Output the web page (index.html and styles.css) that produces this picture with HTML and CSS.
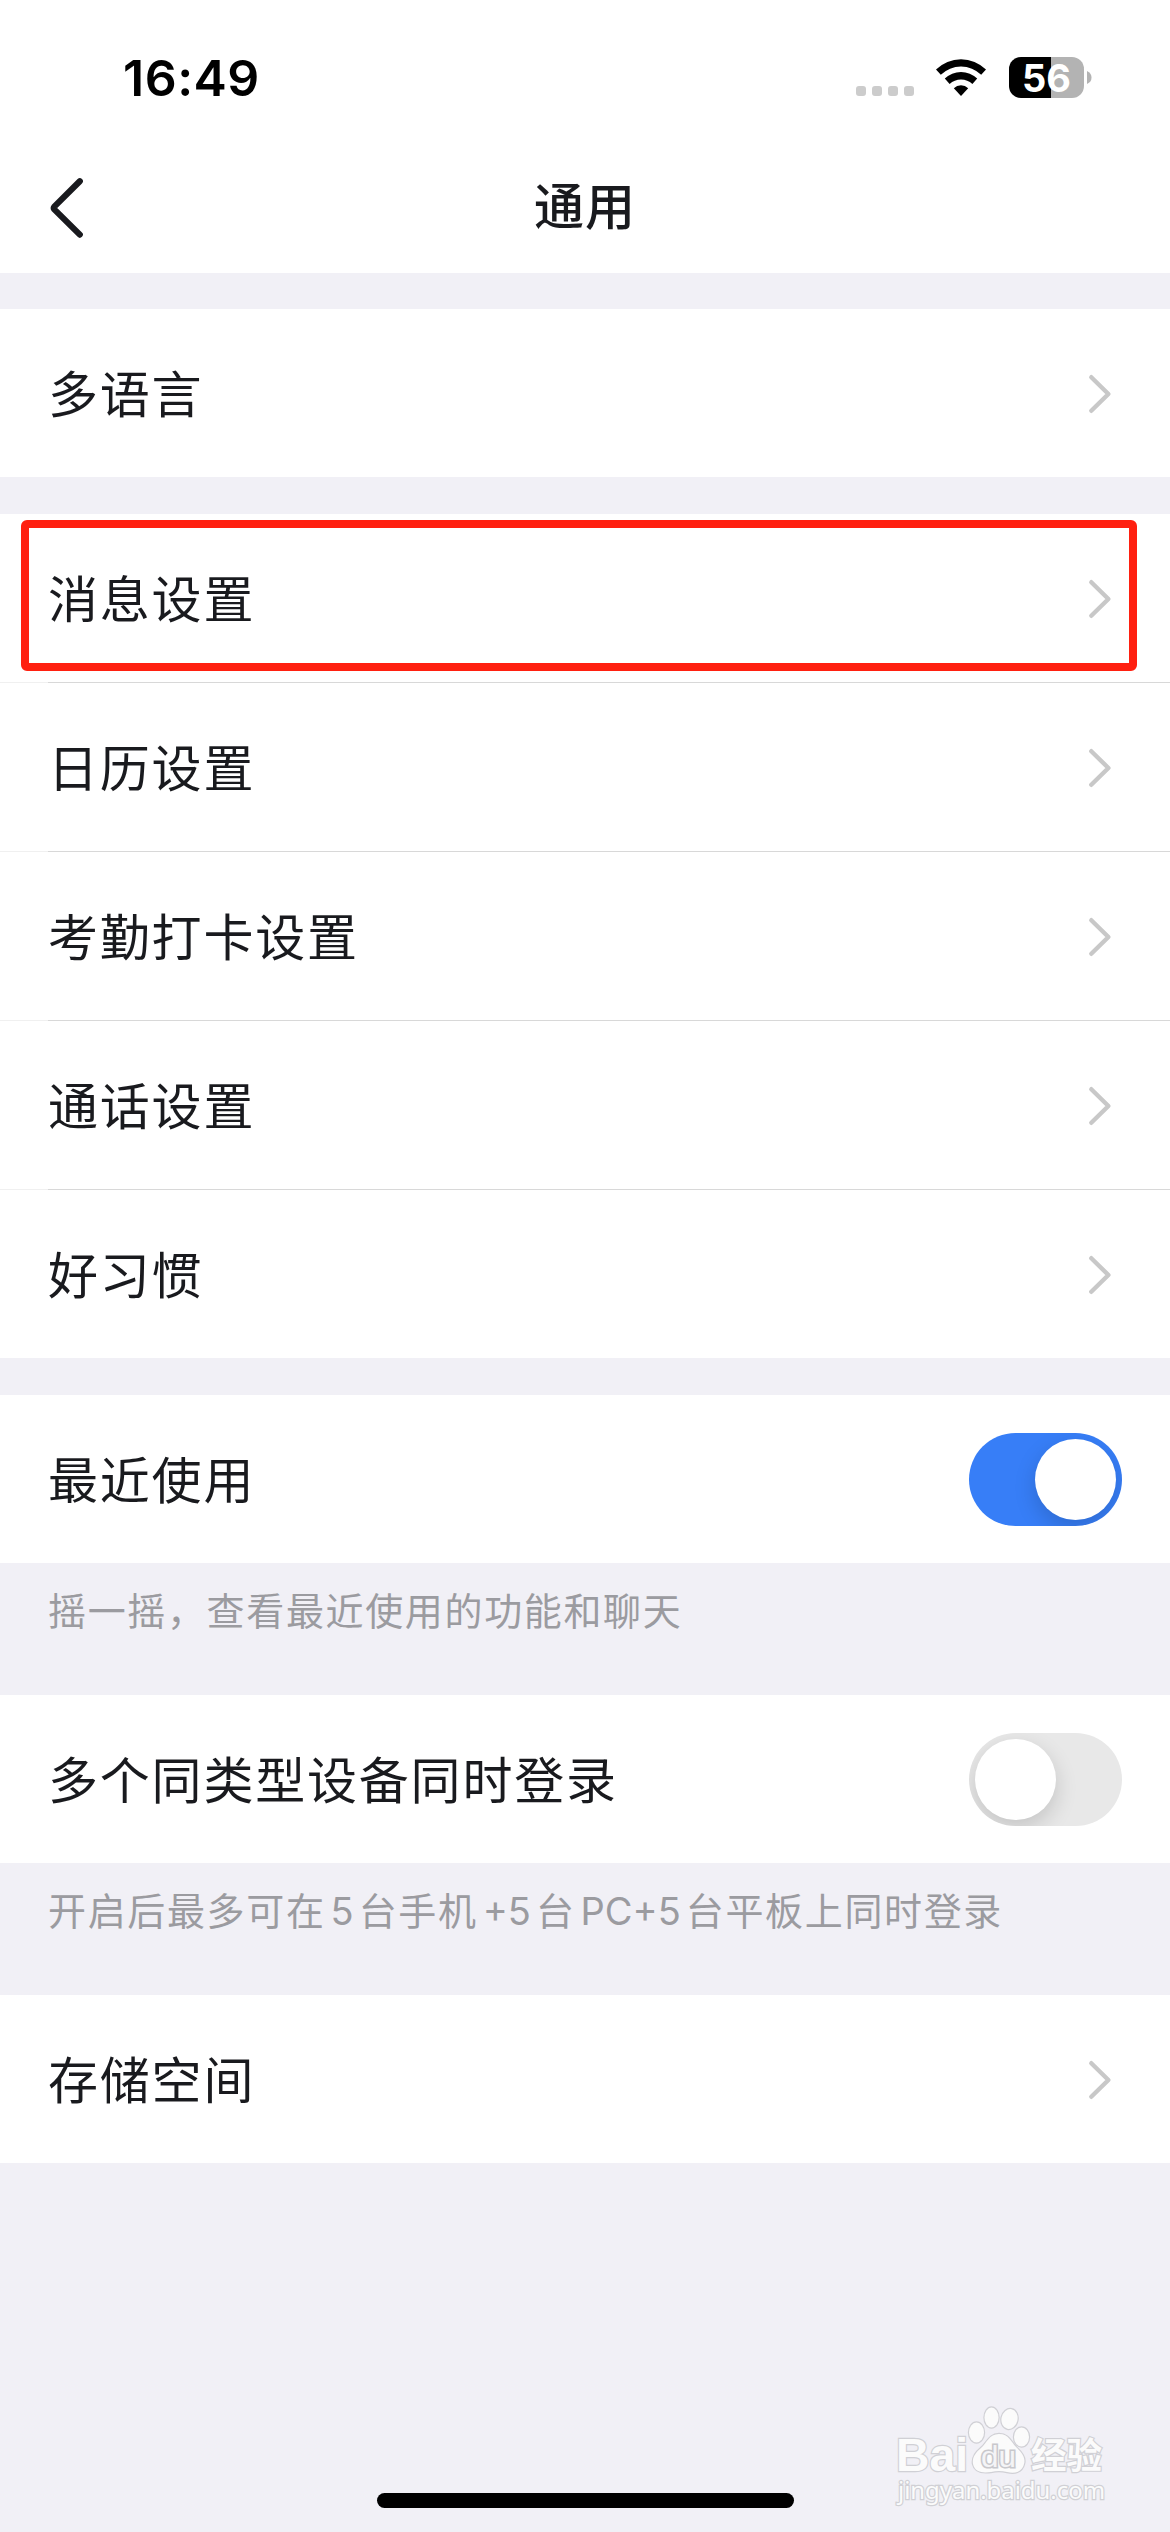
FILE: index.html
```html
<!DOCTYPE html>
<html lang="zh-CN">
<head>
<meta charset="utf-8">
<title>通用</title>
<link rel="stylesheet" href="styles.css">
</head>
<body>
<svg class="defs" width="0" height="0" aria-hidden="true">
  <symbol id="chevron" viewBox="0 0 24 40"><path d="M3.3 3.2 20.4 20 3.3 36.8" fill="none" stroke="#c8c8c8" stroke-width="4.4" stroke-linecap="round" stroke-linejoin="round"/></symbol>
</svg>
<div class="screen">
  <header class="top">
    <div class="status">
      <span class="time">16:49</span>
      <div class="indicators">
        <div class="signal"><i></i><i></i><i></i><i></i></div>
        <svg class="wifi" viewBox="0 0 50 37" width="50" height="37">
          <path d="M0 10.5A35.5 35.5 0 0 1 50 10.5L45.2 15.8A29 29 0 0 0 4.800 15.800Z"/>
          <path d="M8.800 19.600A23 23 0 0 1 41.200 19.600L36.400 25A16.500 16.500 0 0 0 13.600 25Z"/>
          <path d="M17.800 29.200A10.500 10.500 0 0 1 32.200 29.200L25 37Z"/>
        </svg>
        <div class="battery"><div class="cell">56</div><svg width="5" height="13" viewBox="0 0 5 13"><path d="M0 0Q4.5 2 4.5 6.5T0 13Z" fill="#b3b3b3"/></svg></div>
      </div>
    </div>
    <nav class="nav">
      <svg class="back" width="40" height="64" viewBox="0 0 40 64"><path d="M35.800 6.200 10.300 31.600Q9.200 33 10.300 34.400L35.800 59.600" fill="none" stroke="#191a1e" stroke-width="6.2" stroke-linecap="round" stroke-linejoin="round"/></svg>
      <h1>通用</h1>
    </nav>
  </header>

  <main>
    <section class="group"><div class="row"><span>多语言</span><svg class="chev"><use href="#chevron"/></svg></div></section>
    <section class="group">
      <div class="row marked"><span>消息设置</span><svg class="chev"><use href="#chevron"/></svg></div>
      <div class="row"><span>日历设置</span><svg class="chev"><use href="#chevron"/></svg></div>
      <div class="row"><span>考勤打卡设置</span><svg class="chev"><use href="#chevron"/></svg></div>
      <div class="row"><span>通话设置</span><svg class="chev"><use href="#chevron"/></svg></div>
      <div class="row"><span>好习惯</span><svg class="chev"><use href="#chevron"/></svg></div>
    </section>
    <section class="group"><div class="row"><span>最近使用</span><div class="switch on"><b></b></div></div></section>
    <p class="hint">摇一摇，查看最近使用的功能和聊天</p>
    <section class="group"><div class="row"><span>多个同类型设备同时登录</span><div class="switch"><b></b></div></div></section>
    <p class="hint">开启后最多可在<em>5</em>台手机<em>+5</em>台<em>PC+5</em>台平板上同时登录</p>
    <section class="group"><div class="row"><span>存储空间</span><svg class="chev"><use href="#chevron"/></svg></div></section>
  </main>

  <div class="home"></div>
  <svg class="watermark" width="230" height="110" viewBox="0 0 230 110">
    <g class="ink">
      <text x="6" y="56" font-size="47" font-weight="700" textLength="72" lengthAdjust="spacingAndGlyphs" class="latin">Bai</text>
      <ellipse cx="86.500" cy="17.500" rx="7.500" ry="10"/>
      <ellipse cx="101.500" cy="2.500" rx="7" ry="10"/>
      <ellipse cx="119.500" cy="4" rx="8" ry="10" transform="rotate(12 119.500 4)"/>
      <ellipse cx="131.500" cy="22" rx="7.500" ry="9.500"/>
      <path d="M109 19C99 19 97 28 91 33C85 38 82 43 83 49C85 58 94 58 101 57Q109 55 117 57C125 59 132 57 134 49C136 42 131 37 126 32C121 27 119 19 109 19Z"/>
      <text x="91" y="52" font-size="29" font-weight="400" textLength="35" lengthAdjust="spacingAndGlyphs" class="latin du">du</text>
      <text x="141" y="54" font-size="36" font-weight="700" textLength="71" lengthAdjust="spacingAndGlyphs" class="han">经验</text>
      <text x="8" y="84" font-size="23" textLength="207" lengthAdjust="spacingAndGlyphs" class="url">jingyan.baidu.com</text>
    </g>
  </svg>
</div>
</body>
</html>
```
FILE: styles.css
```css
*, *::after { box-sizing: border-box; margin: 0; padding: 0; }
body { background: #f1f0f6; font-family: Inter, "Noto Sans CJK SC", sans-serif; color: #191a1e; }
.defs { position: absolute; }
.screen { position: relative; width: 1170px; height: 2532px; overflow: hidden; background: #f1f0f6; }
.top { height: 273px; background: #fff; }
.status { height: 141px; padding: 0 78px 0 123px; display: flex; justify-content: space-between; color: #000; }
.time { margin-top: 48px; font-size: 50px; line-height: 60px; font-weight: 600; letter-spacing: .5px; }
.indicators { display: flex; height: 100px; align-items: flex-start; }
.signal { display: flex; gap: 6px; margin: 86px 22px 0 0; }
.signal i { width: 10px; height: 10px; border-radius: 3px; background: #ccc; }
.wifi { margin: 59px 23px 0 0; }
.battery { display: flex; align-items: center; gap: 3px; margin-top: 57px; height: 41px; }
.cell { width: 75px; height: 41px; border-radius: 12px; background: linear-gradient(90deg, #000 42px, #b3b3b3 42px); color: #fff; font-size: 38px; line-height: 42px; font-weight: 700; text-align: center; }
.nav { height: 132px; display: grid; grid-template-columns: 90px 1fr 90px; align-items: center; }
.back { margin-left: 44px; }
h1 { font-size: 50px; font-weight: 500; letter-spacing: 1px; text-align: center; line-height: 72px; }
main { padding-top: 36px; }
.group { background: #fff; }
.group + .group { margin-top: 37px; }
.row { position: relative; height: 168px; padding: 0 48px; display: flex; align-items: center; justify-content: space-between; font-size: 50px; letter-spacing: 1.8px; }
.row span { padding-bottom: 5px; }
.row + .row { height: 169px; padding-top: 1px; background: linear-gradient(90deg, #f0f0f0 48px, #d8d8d8 48px) top / 100% 1px no-repeat; }
.chev { width: 24px; height: 40px; margin: 2px 10px 0 0; }
.marked::after { content: ""; position: absolute; left: 21px; top: 6px; width: 1116px; height: 151px; border: 8px solid #ff2010; border-radius: 6px; }
.switch { width: 153px; height: 93px; border-radius: 47px; padding: 6px; background: #e8e8e8; display: flex; overflow: hidden; }
.switch b { width: 81px; height: 81px; border-radius: 50%; background: #fff; box-shadow: 0 8px 22px rgba(0,0,0,.16); }
.switch.on { background: #377ef7; justify-content: flex-end; }
.hint { height: 132px; padding: 20px 48px 0; line-height: 56px; font-size: 38px; letter-spacing: 1.65px; color: #9b9ba0; white-space: nowrap; }
.hint em { font-style: normal; margin: 0 5px; letter-spacing: 0; }
.home { position: absolute; left: 377px; top: 2493px; width: 417px; height: 15px; border-radius: 8px; background: #000; }
.watermark { position: absolute; left: 890px; top: 2415px; overflow: visible; }
.ink { fill: #fbfbfb; stroke: #d0d0d5; stroke-width: 2.4px; paint-order: stroke; }
.latin { font-family: "Liberation Sans", sans-serif; }
.han { font-family: "Noto Sans CJK SC", sans-serif; }
.url { font-family: "Noto Sans", sans-serif; }
.du { fill: #f4f4f6; stroke: #c8c8cc; stroke-width: 3px; }
```
